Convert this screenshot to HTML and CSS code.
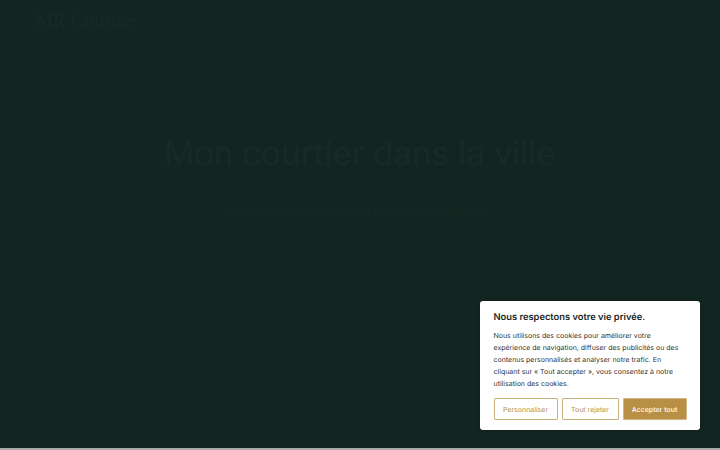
FILE: index.html
```html
<!DOCTYPE html>
<html lang="fr">
<head>
<meta charset="utf-8">
<title>Vie privée</title>
<link rel="stylesheet" href="styles.css">
</head>
<body>
<main class="page">
  <header class="header"><span class="logo">MR Courtier</span></header>
  <section class="hero">
    <h1 class="hero-title">Mon courtier dans la ville</h1>
    <p class="hero-sub">Un accompagnement sur mesure pour votre projet immobilier</p>
  </section>
</main>
<aside class="cookie">
  <h2 class="cookie-title">Nous respectons votre vie privée.</h2>
  <p class="cookie-text">Nous utilisons des cookies pour améliorer votre expérience de navigation, diffuser des publicités ou des contenus personnalisés et analyser notre trafic. En cliquant sur « Tout accepter », vous consentez à notre utilisation des cookies.</p>
  <div class="cookie-actions">
    <button class="btn btn-custom">Personnaliser</button>
    <button class="btn btn-reject">Tout rejeter</button>
    <button class="btn btn-accept">Accepter tout</button>
  </div>
</aside>
</body>
</html>
```
FILE: styles.css
```css
* { box-sizing: border-box; }
html, body { margin: 0; height: 100%; overflow: hidden; }
body {
  background: #a9a9a9;
  font-family: Inter, "Liberation Sans", sans-serif;
  text-rendering: geometricPrecision;
}
.page {
  height: 448px;
  background: #132521;
  display: flex;
  flex-direction: column;
}
.header { padding: 10px 35px; height: 44px; }
.logo {
  font-family: "Liberation Serif", serif;
  font-size: 20px;
  color: #182a26;
}
.hero { text-align: center; padding-top: 88px; }
.hero-title {
  margin: 0;
  font-size: 33px;
  font-weight: 400;
  line-height: 42px;
  color: #182a26;
}
.hero-sub {
  margin: 32px 0 0;
  font-size: 9px;
  color: #182a26;
}
.cookie {
  position: absolute;
  left: 480px;
  top: 301px;
  width: 220px;
  height: 129px;
  padding: 10px 13.5px 0;
  background: #fff;
  border-radius: 3px;
  box-shadow: 0 0 4px rgba(0,0,0,.2);
}
.cookie-title {
  margin: 0;
  font-size: 9.33px;
  line-height: 13px;
  font-weight: 600;
  color: #1c1f23;
}
.cookie-text {
  margin: 6px 0 0;
  font-size: 7px;
  line-height: 12px;
  color: #333;
}
.cookie-actions { display: flex; gap: 4px; margin-top: 8px; }
.btn {
  height: 22px;
  padding: 0;
  font-family: inherit;
  font-size: 7px;
  text-rendering: geometricPrecision;
  border-radius: 1px;
  border: 1.5px solid #c9b07a;
  background: #fff;
  color: #b98f45;
}
.btn-custom { width: 64px; }
.btn-reject { width: 57px; }
.btn-accept { width: 64px; background: #b98f45; color: #fff; font-weight: 500; border-color: #cfb684; }
```
